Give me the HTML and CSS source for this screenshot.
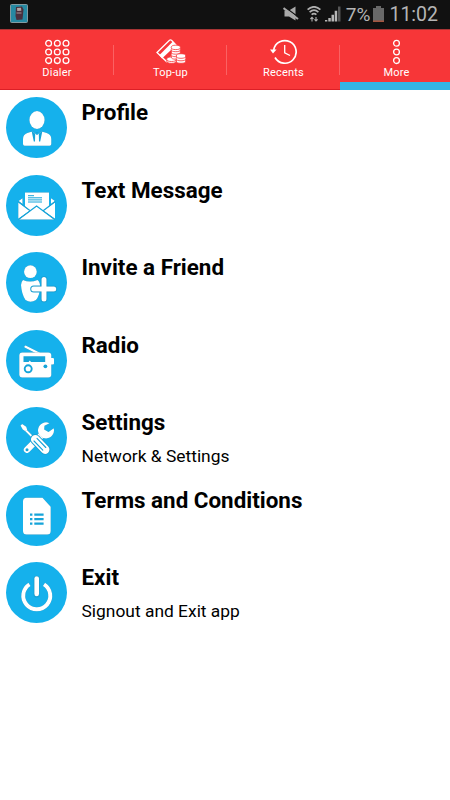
FILE: index.html
```html
<!DOCTYPE html>
<html lang="en">

<head>
    <meta charset="UTF-8">
    <meta name="viewport" content="width=device-width, initial-scale=1.0">
    <title>More</title>
    <link rel="stylesheet" href="styles.css">
</head>

<body>
    <header class="status-bar">
        <svg class="app-icon" width="18" height="19" viewBox="0 0 18 19">
            <rect x=".5" y=".5" width="17" height="18" rx="1" fill="#2689a2" stroke="#839ba1" />
            <path d="M6 3l6-.5 1.500 3-1 10-6 .5-1-4z" fill="#49303d" />
            <path d="M7 4l4-.3.3 3-4 .4z" fill="#b0a6a5" />
            <path d="M6.500 9h5" stroke="#aa9596" />
        </svg>
        <div class="status-icons">
            <svg width="16" height="16" viewBox="0 0 16 16">
                <path d="M1.500 4.500h4.500L12.500.5v14L6 10.500H1.500z" fill="#a9a9a9" />
                <path d="M1 .5l15 11" stroke="#111" stroke-width="1.300" />
                <path d="M.5 2l14.500 11" stroke="#a9a9a9" stroke-width="2" />
            </svg>
            <svg class="wifi" width="14" height="16" viewBox="0 0 14 16" fill="none" stroke="#b0b0b0" stroke-width="1.700">
                <path d="M.6 3.600Q7-2 13.400 3.600M2.600 6.100q4.400-3.800 8.800 0M4.600 8.600q2.400-2 4.800 0" />
                <path d="M5 15.500v-4M3.400 13L5 11.300 6.500 13M9 11v4M7.500 13.300L9 15l1.600-1.700" stroke-width="1.100" />
            </svg>
            <svg class="signal" width="16" height="16" viewBox="0 0 16 16">
                <path d="M0 15.500v-1.500h2.300v1.500zM3.300 15.500V12h2.500v3.500zM6.500 15.500V8.800h2.500v6.700zM9.700 15.500V4.700h2.500v10.800z" fill="#b5b5b5" />
                <path d="M13 15.500V.5h2.500v15z" fill="#555" />
            </svg>
            <span class="percent">7%</span>
            <svg class="battery" width="11" height="16" viewBox="0 0 11 16">
                <path d="M0 2h3V0h5v2h3v14H0z" fill="#686868" />
                <path d="M0 14.500h11V16H0z" fill="#a6553f" />
            </svg>
            <span class="clock">11:02</span>
        </div>
    </header>

    <nav class="tabs">
        <div class="tab">
            <svg width="27" height="26" viewBox="0 0 27 26" fill="none" stroke="#fff" stroke-width="1.300">
                <circle cx="4.600" cy="4.300" r="2.900" /><circle cx="13.300" cy="4.300" r="2.900" /><circle cx="22" cy="4.300" r="2.900" />
                <circle cx="4.600" cy="13" r="2.900" /><circle cx="13.300" cy="13" r="2.900" /><circle cx="22" cy="13" r="2.900" />
                <circle cx="4.600" cy="21.600" r="2.900" /><circle cx="13.300" cy="21.600" r="2.900" /><circle cx="22" cy="21.600" r="2.900" />
            </svg>
            <span>Dialer</span>
        </div>
        <div class="tab">
            <svg width="30" height="26" viewBox="0 0 30 26">
                <path d="M1 13.500L13.500 1.200q1-.8 2 0l5 5.300-3 1.500v5l-3 6-4 3.500z" fill="none" stroke="#fff" stroke-width="1.300" />
                <path d="M3.300 16.300L16.600 2.800l3.400 3.400L6 19.500z" fill="#fff" />
                <g fill="#fff" stroke="#f73638" stroke-width=".8">
                    <ellipse cx="15.500" cy="22" rx="4.800" ry="2.300" />
                    <ellipse cx="15.500" cy="20.200" rx="4.800" ry="2.300" />
                    <ellipse cx="19.800" cy="18" rx="4.600" ry="2.200" />
                    <ellipse cx="19.800" cy="15.500" rx="4.600" ry="2.200" />
                    <ellipse cx="19.800" cy="13" rx="4.600" ry="2.200" />
                    <ellipse cx="19.800" cy="10.500" rx="4.600" ry="2.200" />
                    <ellipse cx="19.800" cy="8.400" rx="4.600" ry="2.200" />
                    <ellipse cx="25" cy="22" rx="4.800" ry="2.300" />
                    <ellipse cx="25" cy="19.500" rx="4.800" ry="2.300" />
                    <ellipse cx="25" cy="17" rx="4.800" ry="2.300" />
                </g>
            </svg>
            <span>Top-up</span>
        </div>
        <div class="tab">
            <svg width="27" height="26" viewBox="0 0 27 26" fill="none" stroke="#fff" stroke-width="1.700">
                <path d="M3.700 11A11.300 11.300 0 1 1 5 18.500" />
                <path d="M0 10.500h6.600L3 14.500z" fill="#fff" stroke="none" />
                <path d="M14.700 6v7.800l5.300 2.700" stroke-width="1.300" />
            </svg>
            <span>Recents</span>
        </div>
        <div class="tab active">
            <svg width="9" height="26" viewBox="0 0 9 26" fill="none" stroke="#fff" stroke-width="1.300">
                <circle cx="4.500" cy="4.300" r="2.900" />
                <circle cx="4.500" cy="13" r="2.900" />
                <circle cx="4.500" cy="21.600" r="2.900" />
            </svg>
            <span>More</span>
        </div>
    </nav>

    <main class="menu">
        <div class="menu-item">
            <svg class="menu-icon" viewBox="0 0 61 61">
                <circle class="disc" cx="30.500" cy="30.500" r="30.500" />
                <g class="glyph">
                    <ellipse cx="31" cy="23" rx="7.600" ry="9" />
                    <path d="M17 47v-5q0-5 5-6.300l4.500-1.200L31 38l4.500-3.500 4.500 1.200q5.300 1.300 5.300 6.300v5q0 1.700-1.700 1.700h-25Q17 48.700 17 47z" />
                </g>
                <path class="cut" d="M25.500 33.500l3.700 3.200-.2 7.800-1.200 0zM36.500 33.500l-3.700 3.200.2 7.800 1.200 0zM29.500 35h3l-1.500 1.700z" />
            </svg>
            <div class="menu-text">
                <h2>Profile</h2>
            </div>
        </div>
        <div class="menu-item">
            <svg class="menu-icon" viewBox="0 0 61 61">
                <circle class="disc" cx="30.500" cy="30.500" r="30.500" />
                <g class="glyph">
                    <path d="M16.500 23.300L12.600 26l3.900 3zM45 23.300l3.900 2.700-3.900 3z" />
                    <path d="M19 17.500h24v14l-6.500 5.500-6-5-6 5L19 31.500z" />
                    <path d="M12.300 27.300l11.400 8.500-11.400 8zM49 27.300l-11.400 8.500 11.400 8z" />
                    <path d="M12.800 44.600L30.600 31.500l17.900 13.100z" />
                </g>
                <path class="line" d="M22 20.700h6M22 22.800h14M22 24.900h14M22 27h14" stroke-width="1" />
                <path class="line" d="M12 26.500l12.200 9.200M49.300 26.500l-12.200 9.200M12.500 44.500l18.100-13.600 18.100 13.600" stroke-width="1.200" />
            </svg>
            <div class="menu-text">
                <h2>Text Message</h2>
            </div>
        </div>
        <div class="menu-item">
            <svg class="menu-icon" viewBox="0 0 61 61">
                <circle class="disc" cx="30.500" cy="30.500" r="30.500" />
                <g class="glyph">
                    <circle cx="24.400" cy="19.700" r="6.400" />
                    <path d="M17 28q7 3 14.500 0 3 2 2.500 8-.5 8-4 12-5.500 3.500-10.500 0-4-6-4.500-15 0-3 2-5z" />
                </g>
                <path class="line" d="M27.700 37h20M38 27.500v19.500" stroke-width="7" stroke-linecap="round" />
                <path class="stroke" d="M27.700 37h20M38 27.500v19.500" stroke-width="5" stroke-linecap="round" />
            </svg>
            <div class="menu-text">
                <h2>Invite a Friend</h2>
            </div>
        </div>
        <div class="menu-item">
            <svg class="menu-icon" viewBox="0 0 61 61">
                <circle class="disc" cx="30.500" cy="30.500" r="30.500" />
                <path class="stroke" d="M19.600 16.800L33 23.500" stroke-width="2.400" stroke-linecap="round" />
                <g class="glyph">
                    <rect x="13.300" y="22.500" width="32" height="25" rx="3" />
                    <rect x="43" y="28" width="5" height="6.500" rx="1" />
                </g>
                <path class="cut" d="M17.500 26.300h21.700v5.600H25l-1.200-1.300-1.200 1.300h-5.100z" />
                <circle class="line" cx="22.200" cy="38.800" r="3.500" stroke-width="1.900" />
                <circle class="cut" cx="39.400" cy="36.300" r="1.900" />
            </svg>
            <div class="menu-text">
                <h2>Radio</h2>
            </div>
        </div>
        <div class="menu-item">
            <svg class="menu-icon" viewBox="0 0 61 61">
                <circle class="disc" cx="30.500" cy="30.500" r="30.500" />
                <path class="stroke" d="M21 42.700l16-16" stroke-width="6.500" stroke-linecap="round" />
                <path class="glyph" d="M43.500 16.200A8 8 0 1 0 47.700 21.200L42.500 25l-4.300-2.500 .3-3.700z" />
                <circle class="cut" cx="21" cy="42.700" r="1.500" />
                <path class="stroke" d="M18 21.500L27 30.500" stroke-width="2" />
                <path class="glyph" d="M14.500 18.500l1.700-1.500 4 2.700 1 3-2 1.300-2.500-1.500z" />
                <path class="line" d="M29.300 32.300l9.800 10.200" stroke-width="10.500" stroke-linecap="round" />
                <path class="stroke" d="M29.300 32.300l9.800 10.200" stroke-width="8.800" stroke-linecap="round" />
                <path class="line" d="M28 34l8.800 9.200M31 31.300l8.800 9.200" stroke-width="1.100" stroke-linecap="round" />
            </svg>
            <div class="menu-text">
                <h2>Settings</h2>
                <p>Network &amp; Settings</p>
            </div>
        </div>
        <div class="menu-item">
            <svg class="menu-icon" viewBox="0 0 61 61">
                <circle class="disc" cx="30.500" cy="30.500" r="30.500" />
                <path class="glyph" d="M20.500 12.700h16l8.200 9V46q0 3.500-3.500 3.500H20.500Q17 49.500 17 46V16.200q0-3.500 3.500-3.500z" />
                <path class="line" d="M24 29.600h2.400M28.300 29.600h9.300M24 34.200h2.400M28.300 34.200h9.300M24 38.700h2.400M28.300 38.700h9.300" stroke-width="2.300" />
            </svg>
            <div class="menu-text">
                <h2>Terms and Conditions</h2>
            </div>
        </div>
        <div class="menu-item">
            <svg class="menu-icon" viewBox="0 0 61 61">
                <circle class="disc" cx="30.500" cy="30.500" r="30.500" />
                <path class="stroke" d="M23.500 22.400A13.500 13.500 0 1 0 38 22.400" stroke-width="4" />
                <path class="line" d="M30.700 17v15.500" stroke-width="6.500" stroke-linecap="round" />
                <path class="stroke" d="M30.700 16.500v15.500" stroke-width="4.700" stroke-linecap="round" />
            </svg>
            <div class="menu-text">
                <h2>Exit</h2>
                <p>Signout and Exit app</p>
            </div>
        </div>
    </main>
</body>

</html>
```
FILE: styles.css
```css
* {
    box-sizing: border-box;
}

body {
    margin: 0;
    height: 100vh;
    overflow: hidden;
    background-color: #fff;
    color: #000;
    font-family: Roboto, "Liberation Sans", sans-serif;
}

/* status bar */
.status-bar {
    display: flex;
    justify-content: space-between;
    height: 29px;
    padding: 4px 12px 0 10px;
    background-color: #111;
    color: #b5b5b5;
}

.status-icons {
    display: flex;
    padding-top: 2px;
}

.wifi {
    margin-left: 8px;
}

.signal {
    margin-left: 4px;
}

.percent,
.clock {
    font-size: 19.5px;
    line-height: 17px;
}

.percent {
    margin-left: 5px;
    font-size: 19px;
}

.battery {
    margin-left: 3px;
}

.clock {
    margin-left: 5px;
}

/* tabs */
.tabs {
    display: grid;
    grid-template-columns: 114px repeat(3, 113px);
    height: 61px;
    overflow: hidden;
    background-color: #f73638;
    border-top: 1px solid #a83434;
}

.tab {
    display: flex;
    flex-direction: column;
    align-items: center;
    height: 60px;
    padding-top: 9px;
    color: #fff;
    font-size: 11px;
    line-height: 16px;
    letter-spacing: 0.2px;
    border-bottom: 1px solid #dc1f26;
    background: linear-gradient(#fa6263, #fa6263) right 15px / 1px 30px no-repeat;
}

.tab.active {
    border-bottom: none;
    background: linear-gradient(#33b5e5, #33b5e5) 0 52px / 113px 8px no-repeat;
}

/* menu list */
.menu-item {
    display: flex;
    height: 77.5px;
    padding: 7px 6px 0;
}

.menu-icon {
    width: 61px;
    height: 61px;
    margin-right: 14.5px;
}

.disc {
    fill: #15b1ec;
}

.glyph {
    fill: #fff;
}

.cut {
    fill: #15a4d9;
}

.stroke {
    fill: none;
    stroke: #fff;
}

.line {
    fill: none;
    stroke: #15a4d9;
}

.glyph,
.stroke {
    filter: drop-shadow(0 0.5px 0.6px rgba(0, 60, 90, 0.5));
}

.menu-text h2 {
    margin: 2.4px 0 0;
    font-size: 22.4px;
    font-weight: 700;
    line-height: 26px;
}

.menu-text p {
    margin: 10.6px 0 0;
    font-size: 17.4px;
    line-height: 21px;
}
```
